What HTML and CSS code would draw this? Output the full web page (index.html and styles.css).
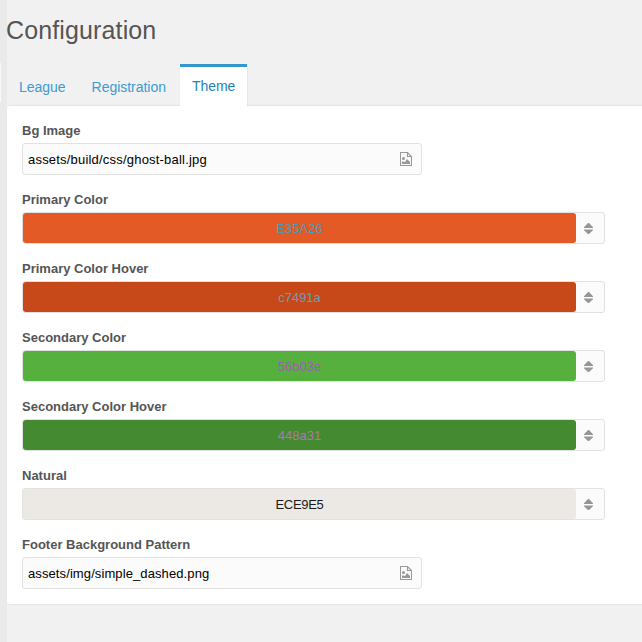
FILE: index.html
```html
<!DOCTYPE html>
<html lang="en">
<head>
<meta charset="utf-8">
<title>Configuration</title>
<link rel="stylesheet" href="styles.css">
</head>
<body>
<svg class="defs" width="0" height="0">
  <symbol id="picture" viewBox="0 0 12 14"><path d="M.5.5h7l4 4v9H.5zM7.500.5v4h4" fill="none" stroke="#999" stroke-width="1.100"/><path d="M2 12v-2l1-1 1 1h1l2-3 1 1 2 2v2z" fill="#999"/><circle cx="3.500" cy="6.500" r="1.500" fill="#999"/></symbol>
  <symbol id="sort" viewBox="0 0 9 11"><path d="M0 5V4.200L4 0h1l4 4.200V5zM0 6.500v.8L4 11h1l4-3.700v-.8z" fill="#969696"/></symbol>
</svg>
<div class="app">
  <aside class="rail"><div class="rail-item"></div></aside>
  <main class="main">
    <h1>Configuration</h1>
    <nav class="tabs">
      <a class="tab">League</a>
      <a class="tab">Registration</a>
      <a class="tab active">Theme</a>
    </nav>
    <section class="panel">
      <div class="field"><label>Bg Image</label><div class="box file"><span class="path background-path">assets/build/css/ghost-ball.jpg</span><svg class="picture"><use href="#picture"/></svg></div></div>
      <div class="field"><label>Primary Color</label><div class="box color"><div class="swatch primary">E35A26</div><svg class="sort"><use href="#sort"/></svg></div></div>
      <div class="field"><label>Primary Color Hover</label><div class="box color"><div class="swatch primary-hover">c7491a</div><svg class="sort"><use href="#sort"/></svg></div></div>
      <div class="field"><label>Secondary Color</label><div class="box color"><div class="swatch secondary">56b03e</div><svg class="sort"><use href="#sort"/></svg></div></div>
      <div class="field"><label>Secondary Color Hover</label><div class="box color"><div class="swatch secondary-hover">448a31</div><svg class="sort"><use href="#sort"/></svg></div></div>
      <div class="field"><label>Natural</label><div class="box color"><div class="swatch natural">ECE9E5</div><svg class="sort"><use href="#sort"/></svg></div></div>
      <div class="field"><label>Footer Background Pattern</label><div class="box file"><span class="path">assets/img/simple_dashed.png</span><svg class="picture"><use href="#picture"/></svg></div></div>
    </section>
  </main>
</div>
</body>
</html>
```
FILE: styles.css
```css
* { box-sizing: border-box; }
body {
  margin: 0;
  background: #f1f1f1;
  color: #555;
  font: 13px "Liberation Sans", Arial, sans-serif;
}
.defs { display: block; }
.app { display: flex; height: 642px; overflow: hidden; }
.rail { width: 7px; flex: none; padding-top: 63px; background: #eaeaea; }
.rail-item { width: 1px; height: 39px; background: #f8f8f8; }
.main { flex: 1; min-width: 0; }
h1 {
  height: 64px;
  margin: 0 0 0 -1px;
  line-height: 60px;
  font-size: 25px;
  font-weight: normal;
  letter-spacing: .13px;
}
.tabs { display: flex; height: 42px; position: relative; z-index: 1; }
.tab {
  height: 41px;
  padding: 0 12px;
  margin-right: 2px;
  border-top: 3px solid transparent;
  font-size: 14px;
  letter-spacing: -.03px;
  line-height: 40px;
  color: #3c9bd2;
}
.tab.active {
  width: 67px;
  height: 42px;
  margin: 0;
  background: #fff;
  border-top-color: #3498cf;
  line-height: 38px;
  color: #2383ba;
  box-shadow: 1px 0 1px rgba(0, 0, 0, .04);
}
.panel {
  height: 498px;
  padding: 12px 15px;
  background: #fff;
  border-radius: 3px 0 0 3px;
  box-shadow: 1px 0 2px rgba(0, 0, 0, .18);
}
.field { height: 69px; }
label { display: block; height: 25px; line-height: 25px; font-weight: bold; }
.box {
  display: flex;
  align-items: center;
  height: 32px;
  border: 1px solid #e2e2e2;
  border-radius: 3px;
  background: #fbfbfb;
}
.file { width: 400px; justify-content: space-between; padding: 0 9px 0 5px; color: #000; }
.path { letter-spacing: .1px; }
.background-path { letter-spacing: .2px; }
.color { width: 583px; }
.swatch {
  width: 553px;
  height: 30px;
  border-radius: 3px;
  line-height: 32px;
  text-align: center;
}
.primary { background: #e35a26; color: #4c9bb8; }
.primary-hover { background: #c7491a; color: #689eb0; }
.secondary { background: #56b03e; color: #a15bb5; }
.secondary-hover { background: #448a31; color: #a67bb2; }
.natural { background: #ece9e5; color: #1a1a1a; letter-spacing: -.3px; }
.picture { width: 12px; height: 14px; }
.sort { width: 9px; height: 11px; margin-left: 8px; }
```
